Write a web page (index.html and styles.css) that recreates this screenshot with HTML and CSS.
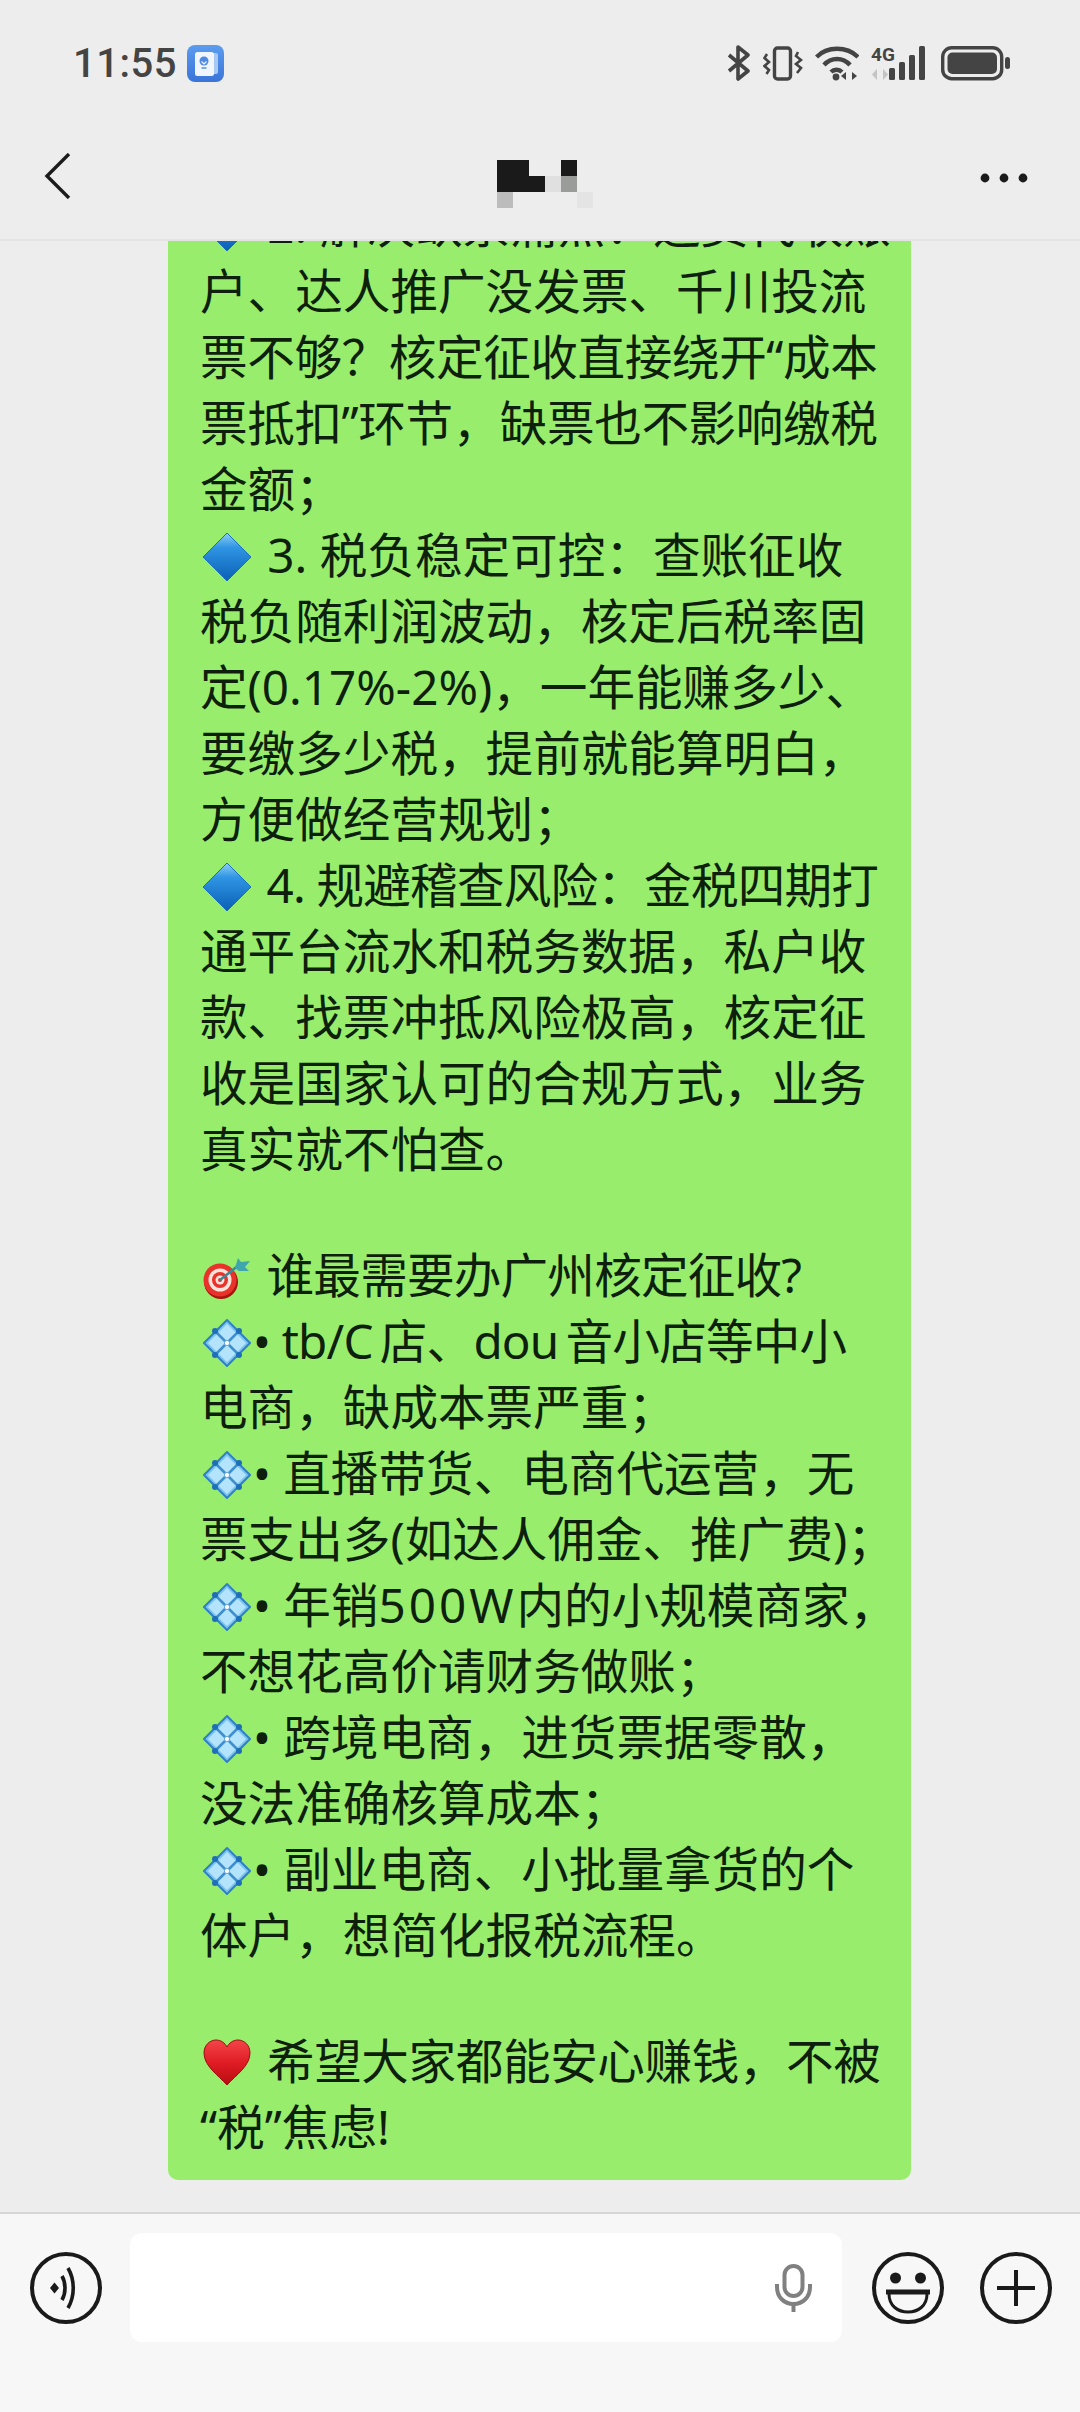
FILE: index.html
```html
<!DOCTYPE html>
<html>
<head>
	<title>chat</title>
	<meta charset="utf-8">
	<link rel="stylesheet" href="styles.css">
</head>
<body>
	<svg class="defs" width="0" height="0">
		<defs>
			<linearGradient id="blueFill" x1="0" y1="0" x2="0" y2="1">
				<stop offset="0" stop-color="#8fd0f5"/>
				<stop offset="0.3" stop-color="#2f95e4"/>
				<stop offset="1" stop-color="#0a5fb4"/>
			</linearGradient>
			<linearGradient id="heartFill" x1="0" y1="0" x2="0" y2="1">
				<stop offset="0" stop-color="#f4454a"/>
				<stop offset="0.5" stop-color="#e01c24"/>
				<stop offset="1" stop-color="#b80d12"/>
			</linearGradient>
			<linearGradient id="cardFill" x1="0" y1="0" x2="0" y2="1">
				<stop offset="0" stop-color="#5b9cf0"/>
				<stop offset="1" stop-color="#3a74d8"/>
			</linearGradient>
			<symbol id="blueDiamond" viewBox="0 0 48 48">
				<path d="M24 0 48 24 24 48 0 24Z" fill="url(#blueFill)" stroke="#1a6fbe" stroke-width="1"/>
			</symbol>
			<symbol id="dotDiamond" viewBox="0 0 48 48">
				<path d="M24 1 47 24 24 47 1 24Z" fill="#7cc4ef" stroke="#2f80c4" stroke-width="2"/>
				<path d="M24 5 33 14 24 23 15 14Z M5 24 14 15 23 24 14 33Z M43 24 34 15 25 24 34 33Z M24 43 33 34 24 25 15 34Z" fill="#b4e4fb"/>
				<path d="M12 12 36 36M36 12 12 36" stroke="#3d8fd0" stroke-width="2.5"/>
				<circle cx="12" cy="12" r="3" fill="#1f6fb8"/>
				<circle cx="36" cy="12" r="3" fill="#1f6fb8"/>
				<circle cx="12" cy="36" r="3" fill="#1f6fb8"/>
				<circle cx="36" cy="36" r="3" fill="#1f6fb8"/>
				<circle cx="24" cy="24" r="2.6" fill="#fff" stroke="#6ba9d8" stroke-width="1"/>
			</symbol>
		</defs>
	</svg>

	<div class="page">
		<div class="status-bar">
			<div class="status-left">
				<span class="time">11:55</span>
				<svg class="app-badge" width="37" height="37" viewBox="0 0 37 37">
					<rect width="37" height="37" rx="8" fill="url(#cardFill)"/>
					<rect x="25" y="8" width="6" height="21" rx="2" fill="#a9c9f5"/>
					<rect x="8" y="7" width="19" height="24" rx="2.5" fill="#f1f6fe"/>
					<circle cx="17" cy="16" r="4.5" fill="#4d8ae4"/>
					<path d="M14.500 16.500 17 19 19.500 16.500" fill="none" stroke="#f1f6fe" stroke-width="1.2"/>
					<rect x="14.500" y="22" width="5" height="2" fill="#7ea9ea"/>
				</svg>
			</div>
			<div class="status-right">
				<svg width="24" height="36" viewBox="0 0 24 36" fill="none" stroke="#444" stroke-width="3.6" stroke-linejoin="round">
					<path d="M2 10 21 26 11 34V2L21 10 2 26"/>
				</svg>
				<svg width="40" height="36" viewBox="0 0 40 36" fill="none" stroke="#444">
					<rect x="11.500" y="3" width="16" height="31" rx="3" stroke-width="3.4"/>
					<path d="M4 9 1.500 13 6 17 1.500 21 6 25 3.500 29M35 7 33 11 38 15 33 19 38 23 34 28" stroke-width="2.6"/>
				</svg>
				<svg width="44" height="36" viewBox="0 0 44 36" fill="none" stroke="#444" stroke-width="4.4">
					<path d="M1.500 12C12 1 32 1 43 12"/>
					<path d="M9 20C16 12 28 12 35 20"/>
					<path d="M16 27C19 24 24 24 27 27"/>
					<circle cx="21" cy="32" r="3.4" fill="#444" stroke="none"/>
					<path d="M31 35V27L26 31ZM37 35V27L42 31Z" fill="#444" stroke="none"/>
				</svg>
				<svg class="signal" width="58" height="36" viewBox="0 0 58 36">
					<text x="0" y="16" class="net-label">4G</text>
					<path d="M6 35V24L1 29.500ZM12 35V24L17 29.500Z" fill="#c4c4c4"/>
					<rect x="18" y="23" width="6" height="12" rx="1.500" fill="#444"/>
					<rect x="28" y="17" width="6" height="18" rx="1.500" fill="#444"/>
					<rect x="38" y="10" width="6" height="25" rx="1.500" fill="#444"/>
					<rect x="48" y="1" width="6" height="34" rx="1.500" fill="#444"/>
				</svg>
				<svg width="69" height="36" viewBox="0 0 69 36">
					<rect x="1.700" y="2.700" width="59" height="31" rx="9" fill="none" stroke="#444" stroke-width="3.4"/>
					<rect x="6.500" y="7.500" width="49.500" height="21.500" rx="5" fill="#444"/>
					<rect x="64" y="12" width="5" height="12" rx="2.500" fill="#444"/>
				</svg>
			</div>
		</div>

		<div class="top-bar">
			<svg class="back" width="28" height="46" viewBox="0 0 28 46" fill="none" stroke="#1b1b1b" stroke-width="3.4">
				<path d="M25 1 3 23 25 45"/>
			</svg>
			<svg class="title-mosaic" width="112" height="48" viewBox="0 0 112 48">
				<path d="M16 0H48V16H64V32H16Z" fill="#1a1a1a"/>
				<rect x="80" y="0" width="16" height="32" fill="#1a1a1a"/>
				<rect x="64" y="16" width="16" height="16" fill="#e0e0e0"/>
				<rect x="80" y="16" width="16" height="16" fill="#999c99"/>
				<rect x="16" y="32" width="16" height="16" fill="#bcbcbc"/>
				<rect x="96" y="32" width="16" height="16" fill="#e4e4e4"/>
			</svg>
			<svg class="more" width="50" height="10" viewBox="0 0 50 10" fill="#1b1b1b">
				<circle cx="5" cy="5" r="4.4"/>
				<circle cx="24" cy="5" r="4.4"/>
				<circle cx="43" cy="5" r="4.4"/>
			</svg>
		</div>

		<div class="chat">
			<div class="bubble">
				<div class="line"><svg class="emoji"><use href="#blueDiamond"/></svg> 2. 解决缺票痛点：运费代收账</div>
				<div class="line">户、达人推广没发票、千川投流</div>
				<div class="line tight">票不够？核定征收直接绕开“成本</div>
				<div class="line tight">票抵扣”环节，缺票也不影响缴税</div>
				<div class="line">金额；</div>
				<div class="line"><svg class="emoji"><use href="#blueDiamond"/></svg> 3. 税负稳定可控：查账征收</div>
				<div class="line">税负随利润波动，核定后税率固</div>
				<div class="line">定(0.17%-2%)，一年能赚多少、</div>
				<div class="line">要缴多少税，提前就能算明白，</div>
				<div class="line">方便做经营规划；</div>
				<div class="line tighter"><svg class="emoji"><use href="#blueDiamond"/></svg> 4. 规避稽查风险：金税四期打</div>
				<div class="line">通平台流水和税务数据，私户收</div>
				<div class="line">款、找票冲抵风险极高，核定征</div>
				<div class="line">收是国家认可的合规方式，业务</div>
				<div class="line">真实就不怕查。</div>
				<div class="line blank">&nbsp;</div>
				<div class="line tighter">
					<svg class="emoji" viewBox="0 0 48 48">
						<circle cx="18" cy="29" r="17" fill="#a8140f"/>
						<circle cx="17" cy="27" r="16.500" fill="#e8322a"/>
						<circle cx="17" cy="27" r="11.500" fill="#fbe3dc"/>
						<circle cx="17" cy="27" r="8" fill="#e8322a"/>
						<circle cx="17" cy="27" r="4.500" fill="#fbe3dc"/>
						<circle cx="17" cy="27" r="2" fill="#e8322a"/>
						<path d="M17 27 36 12" stroke="#3a8a9a" stroke-width="2.6"/>
						<path d="M32 15 35 5 38 9 47 8 42 14 46 18 36 18Z" fill="#3fa6ad"/>
					</svg> 谁最需要办广州核定征收?</div>
				<div class="line tighter"><svg class="emoji dot"><use href="#dotDiamond"/></svg>• tb/C&#8201;店、dou&#8201;音小店等中小</div>
				<div class="line">电商，缺成本票严重；</div>
				<div class="line"><svg class="emoji dot"><use href="#dotDiamond"/></svg>• 直播带货、电商代运营，无</div>
				<div class="line">票支出多(如达人佣金、推广费)；</div>
				<div class="line"><svg class="emoji dot"><use href="#dotDiamond"/></svg>• 年销<span class="latin-wide">500W</span>内的小规模商家，</div>
				<div class="line">不想花高价请财务做账；</div>
				<div class="line"><svg class="emoji dot"><use href="#dotDiamond"/></svg>• 跨境电商，进货票据零散，</div>
				<div class="line">没法准确核算成本；</div>
				<div class="line"><svg class="emoji dot"><use href="#dotDiamond"/></svg>• 副业电商、小批量拿货的个</div>
				<div class="line">体户，想简化报税流程。</div>
				<div class="line blank">&nbsp;</div>
				<div class="line tight">
					<svg class="emoji" viewBox="0 0 48 48">
						<path d="M24 46C15 36 1 27 1 14 1 6 7 1 13 1 18 1 22 4 24 8 26 4 30 1 35 1 41 1 47 6 47 14 47 27 33 36 24 46Z" fill="url(#heartFill)" stroke="#9c0c10" stroke-width="1"/>
					</svg> 希望大家都能安心赚钱，不被</div>
				<div class="line">“税”焦虑!</div>
			</div>
		</div>

		<div class="composer">
			<svg class="round-icon" width="72" height="72" viewBox="0 0 72 72" fill="none" stroke="#1a1a1a" stroke-width="4">
				<circle cx="36" cy="36" r="34"/>
				<path d="M20 36 24.500 30.500 29 36 24.500 41.500Z" fill="#1a1a1a" stroke="none"/>
				<path d="M32 24C36 31 36 41 32 48" stroke-width="3.6"/>
				<path d="M38 16C45 28 45 44 38 56" stroke-width="3.6"/>
			</svg>
			<div class="input-box">
				<svg width="37" height="48" viewBox="0 0 37 48" fill="none" stroke="#808080" stroke-width="4">
					<rect x="9.500" y="2" width="18" height="30" rx="9"/>
					<path d="M2 20V23C2 33 9 40 18.500 40 28 40 35 33 35 23V20"/>
					<path d="M18.500 40V48"/>
				</svg>
			</div>
			<svg class="round-icon emoji-btn" width="72" height="72" viewBox="0 0 72 72" fill="none" stroke="#1a1a1a" stroke-width="4">
				<circle cx="36" cy="36" r="34"/>
				<circle cx="23.500" cy="26" r="5.500" fill="#1a1a1a" stroke="none"/>
				<circle cx="48.500" cy="26" r="5.500" fill="#1a1a1a" stroke="none"/>
				<path d="M14 40H58" stroke-width="5"/>
				<path d="M17 42C17 54 26 60 36 60 46 60 55 54 55 42" stroke-width="3"/>
			</svg>
			<svg class="round-icon plus-btn" width="72" height="72" viewBox="0 0 72 72" fill="none" stroke="#1a1a1a" stroke-width="4">
				<circle cx="36" cy="36" r="34"/>
				<path d="M17 36H55M36 18V54"/>
			</svg>
		</div>
	</div>
</body>
</html>
```

FILE: styles.css
```css
html, body {
	margin: 0;
	padding: 0;
	background: #ededed;
}

.defs {
	position: absolute;
}

.page {
	width: 1080px;
	height: 2412px;
	display: flex;
	flex-direction: column;
	overflow: hidden;
	font-family: "Noto Sans", "Noto Sans CJK SC", sans-serif;
}

.status-bar {
	flex: none;
	height: 120px;
	box-sizing: border-box;
	padding: 45px 70px 0 73px;
	display: flex;
	justify-content: space-between;
	align-items: flex-start;
}

.status-left {
	display: flex;
	align-items: center;
	gap: 10px;
}

.time {
	font-family: Roboto, sans-serif;
	font-size: 40px;
	font-weight: 500;
	line-height: 37px;
	letter-spacing: 0.5px;
	color: #444;
}

.status-right {
	display: flex;
	gap: 12px;
}

.signal {
	overflow: visible;
}

.net-label {
	font-family: Roboto, sans-serif;
	font-size: 19px;
	font-weight: 700;
	fill: #444;
}

.top-bar {
	flex: none;
	height: 121px;
	box-sizing: border-box;
	border-bottom: 2px solid #e3e3e3;
	padding: 0 50px 0 44px;
	display: grid;
	grid-template-columns: 1fr auto 1fr;
	align-items: center;
}

.back {
	margin-top: -7px;
}

.title-mosaic {
	margin-top: 8px;
}

.more {
	justify-self: end;
	margin-top: -4px;
}

.chat {
	flex: 1;
	min-height: 0;
	overflow: hidden;
	display: flex;
	flex-direction: column;
	justify-content: flex-end;
	padding: 0 0 32px 168px;
}

.bubble {
	flex: none;
	width: 743px;
	box-sizing: border-box;
	padding: 0 0 20px 32px;
	background: #98ee6c;
	border-radius: 10px;
	color: #0e1f0b;
	font-size: 47.6px;
}

.line {
	height: 66px;
	line-height: 66px;
	white-space: nowrap;
}

.blank {
	height: 60px;
}

.tight {
	letter-spacing: -0.4px;
}

.tighter {
	letter-spacing: -0.8px;
}

.latin-wide {
	letter-spacing: 3px;
}

.emoji {
	width: 48px;
	height: 48px;
	vertical-align: -8px;
	margin: 0 4px 0 3px;
}

.emoji.dot {
	margin-right: 2px;
}

.composer {
	flex: none;
	height: 200px;
	box-sizing: border-box;
	border-top: 2px solid #d6d6d6;
	background: #f7f7f7;
	padding: 19px 0 0 30px;
	display: flex;
	align-items: flex-start;
}

.round-icon {
	flex: none;
	margin-top: 19px;
}

.input-box {
	width: 712px;
	height: 109px;
	margin-left: 28px;
	box-sizing: border-box;
	padding-right: 30px;
	background: #fff;
	border-radius: 12px;
	display: flex;
	justify-content: flex-end;
	align-items: center;
}

.emoji-btn {
	margin-left: 30px;
}

.plus-btn {
	margin-left: 36px;
}
```
